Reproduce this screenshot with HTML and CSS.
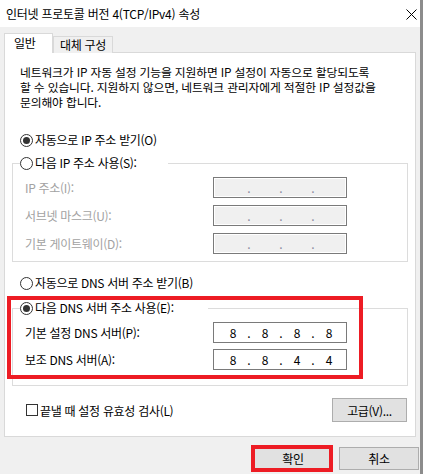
FILE: index.html
```html
<!DOCTYPE html>
<html lang="ko">
<head>
<meta charset="utf-8">
<title>인터넷 프로토콜 버전 4(TCP/IPv4) 속성</title>
<link rel="stylesheet" href="styles.css">
</head>
<body>
<div class="window">
  <div class="titlebar">
    <span class="title">인터넷 프로토콜 버전 4(TCP/IPv4) 속성</span>
    <svg class="close" width="11" height="11" viewBox="0 0 11 11"><path d="M0.5 0.5L10.5 10.5M10.5 0.5L0.5 10.5" stroke="#000" stroke-width="1"/></svg>
  </div>
  <div class="tabs">
    <div class="tab active">일반</div>
    <div class="tab">대체 구성</div>
  </div>
  <div class="pane">
    <p class="desc">네트워크가 IP 자동 설정 기능을 지원하면 IP 설정이 자동으로 할당되도록<br>할 수 있습니다. 지원하지 않으면, 네트워크 관리자에게 적절한 IP 설정값을<br>문의해야 합니다.</p>

    <div class="option first"><span class="radio checked"></span><span class="opt-text">자동으로 IP 주소 받기(O)</span></div>

    <fieldset class="group group-ip">
      <legend class="option legend-ip"><span class="radio"></span><span class="opt-text">다음 IP 주소 사용(S):</span></legend>
      <div class="field-row disabled">
        <span class="label">IP 주소(I):</span>
        <div class="ipbox"><span class="seg"></span><span class="dot">.</span><span class="seg"></span><span class="dot">.</span><span class="seg"></span><span class="dot">.</span><span class="seg"></span></div>
      </div>
      <div class="field-row disabled">
        <span class="label">서브넷 마스크(U):</span>
        <div class="ipbox"><span class="seg"></span><span class="dot">.</span><span class="seg"></span><span class="dot">.</span><span class="seg"></span><span class="dot">.</span><span class="seg"></span></div>
      </div>
      <div class="field-row disabled">
        <span class="label">기본 게이트웨이(D):</span>
        <div class="ipbox"><span class="seg"></span><span class="dot">.</span><span class="seg"></span><span class="dot">.</span><span class="seg"></span><span class="dot">.</span><span class="seg"></span></div>
      </div>
    </fieldset>

    <div class="option dns-auto"><span class="radio"></span><span class="opt-text">자동으로 DNS 서버 주소 받기(B)</span></div>

    <fieldset class="group group-dns">
      <legend class="option legend-dns"><span class="radio checked"></span><span class="opt-text">다음 DNS 서버 주소 사용(E):</span></legend>
      <div class="field-row">
        <span class="label">기본 설정 DNS 서버(P):</span>
        <div class="ipbox"><span class="seg">8</span><span class="dot">.</span><span class="seg">8</span><span class="dot">.</span><span class="seg">8</span><span class="dot">.</span><span class="seg">8</span></div>
      </div>
      <div class="field-row">
        <span class="label">보조 DNS 서버(A):</span>
        <div class="ipbox"><span class="seg">8</span><span class="dot">.</span><span class="seg">8</span><span class="dot">.</span><span class="seg">4</span><span class="dot">.</span><span class="seg">4</span></div>
      </div>
    </fieldset>

    <div class="bottom-row">
      <div class="check-wrap"><span class="checkbox"></span><span class="opt-text">끝낼 때 설정 유효성 검사(L)</span></div>
      <button class="btn btn-adv">고급(V)...</button>
    </div>
  </div>
  <div class="buttons">
    <button class="btn btn-main">확인</button>
    <button class="btn btn-main">취소</button>
  </div>
  <div class="mark mark-dns"></div>
  <div class="mark mark-ok"></div>
</div>
</body>
</html>
```
FILE: styles.css
```css
* { box-sizing: border-box; }
html, body { margin: 0; padding: 0; }
body {
  width: 423px;
  height: 474px;
  overflow: hidden;
  background: #f0f0f0;
  font-family: "Noto Sans CJK KR", "Noto Sans", sans-serif;
  font-size: 12px;
  color: #000;
}
.window {
  position: relative;
  width: 423px;
  height: 474px;
  background: #f0f0f0;
  border-right: 3px solid #8c8c8c;
}
.titlebar {
  height: 27px;
  background: #fff;
  display: flex;
  align-items: center;
  justify-content: space-between;
  padding: 0 3px 0 6px;
}
.title { font-size: 12px; line-height: 16px; letter-spacing: -0.25px; }
.close { display: block; margin-top: 1px; }

.tabs {
  display: flex;
  align-items: flex-end;
  height: 20px;
  margin-top: 6px;
  padding-left: 4px;
}
.tab {
  height: 17px;
  padding: 0 6px;
  border: 1px solid #d9d9d9;
  border-bottom: 0;
  background: #f0f0f0;
  line-height: 16px;
  letter-spacing: -0.3px;
}
.tab.active {
  position: relative;
  z-index: 1;
  height: 20px;
  width: 49px;
  padding: 0 0 0 9px;
  background: #fff;
  line-height: 18px;
}

.pane {
  margin: -1px 4px 0 4px;
  height: 385px;
  border: 1px solid #d9d9d9;
  background: #fff;
  padding: 0 7px;
  display: flow-root;
}
.desc {
  margin: 11px 0 0 8px;
  font-size: 11.8px;
  line-height: 15px;
  letter-spacing: -0.15px;
}
.option {
  display: flex;
  align-items: center;
  height: 16px;
  line-height: 16px;
  letter-spacing: -0.3px;
}
.option.first { margin: 23px 0 0 8px; }
.option.dns-auto { margin: 13px 0 0 8px; }
.radio {
  width: 13px;
  height: 13px;
  border: 1px solid #333;
  border-radius: 50%;
  background: #fff;
  display: flex;
  align-items: center;
  justify-content: center;
  flex: none;
}
.radio.checked::after {
  content: "";
  width: 7px;
  height: 7px;
  border-radius: 50%;
  background: #333;
}
.opt-text { margin-left: 2px; white-space: nowrap; }

.group {
  margin: 7px 0 0 0;
  padding: 0 0 7px 0;
  border: 1px solid #dcdcdc;
  min-width: 0;
}
.group-dns { margin-top: 9px; padding-bottom: 15px; }
.group legend {
  padding: 0;
  margin-left: 7px;
  width: 148px;
}
.group legend.legend-dns { width: 188px; }

.field-row {
  display: flex;
  align-items: center;
  height: 21px;
  margin: 7px 0 0 12px;
  letter-spacing: -0.3px;
}
.group legend + .field-row { margin-top: 6px; }
.group-dns .field-row + .field-row { margin-top: 6px; }
.label { width: 188px; flex: none; white-space: nowrap; }
.field-row.disabled .label { color: #a2a2a2; }

.ipbox {
  width: 134px;
  height: 21px;
  border: 1px solid #7a7a7a;
  background: #fff;
  display: flex;
  align-items: center;
  padding-left: 6px;
  font-size: 12px;
  letter-spacing: 0;
}
.field-row.disabled .ipbox {
  background: #f0f0f0;
  box-shadow: inset 0 0 0 1px #fff;
  color: #8a8aa0;
}
.seg { width: 26px; text-align: center; line-height: 19px; }
.dot { width: 6px; text-align: center; line-height: 19px; }

.bottom-row {
  display: flex;
  align-items: center;
  justify-content: space-between;
  margin: 12px 1px 0 14px;
  height: 24px;
}
.check-wrap { display: flex; align-items: center; letter-spacing: -0.3px; }
.checkbox {
  width: 12px;
  height: 12px;
  border: 1px solid #333;
  background: #fff;
  flex: none;
}
.check-wrap .opt-text { margin-left: 2px; }

.btn {
  font-family: inherit;
  font-size: 12px;
  color: #000;
  background: #e1e1e1;
  border: 1px solid #adadad;
  padding: 0;
  margin: 0;
  letter-spacing: -0.3px;
}
.btn-adv { width: 75px; height: 24px; }
.buttons {
  display: flex;
  justify-content: flex-end;
  gap: 6px;
  margin-top: 10px;
  padding-right: 1px;
}
.btn-main { width: 80px; height: 23px; }

.mark {
  position: absolute;
  border: 4px solid #ed1c24;
  pointer-events: none;
}
.mark-dns { left: 7px; top: 296px; width: 356px; height: 83px; }
.mark-ok { left: 251px; top: 445px; width: 82px; height: 27px; }
```
